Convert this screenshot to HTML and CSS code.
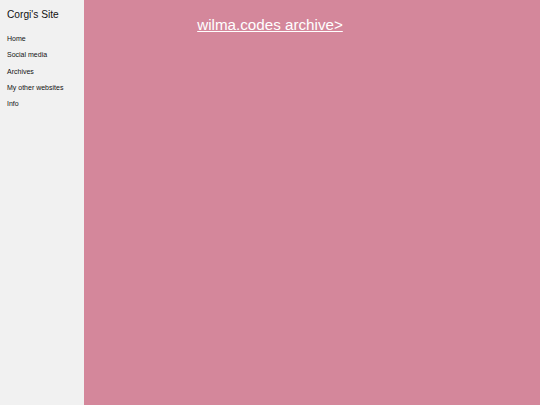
FILE: index.html
```html
<!DOCTYPE html>
<html>
<head>
<meta charset="utf-8">
<link rel="stylesheet" href="styles.css">
</head>
<body>
<div class="page">
  <aside class="sidebar">
    <div class="title">Corgi's Site</div>
    <nav class="nav">
      <a class="nav-item" href="#">Home</a>
      <a class="nav-item" href="#">Social media</a>
      <a class="nav-item" href="#">Archives</a>
      <a class="nav-item" href="#">My other websites</a>
      <a class="nav-item" href="#">Info</a>
    </nav>
  </aside>
  <main class="main">
    <a class="archive-link" href="#">wilma.codes archive&gt;</a>
  </main>
</div>
</body>
</html>
```
FILE: styles.css
```css
html, body {
  margin: 0;
  padding: 0;
  height: 100%;
}
body {
  font-family: "Liberation Sans", Arial, sans-serif;
}
.page {
  display: flex;
  height: 405px;
}
.sidebar {
  width: 84px;
  flex: none;
  background: #f1f1f1;
  padding: 8px 0 0 7px;
  box-sizing: border-box;
}
.title {
  font-size: 10.2px;
  color: #111;
  line-height: 14px;
}
.nav {
  display: flex;
  flex-direction: column;
  margin-top: 9px;
}
.nav-item {
  font-size: 7px;
  line-height: 16.3px;
  color: #111;
  text-decoration: none;
  white-space: nowrap;
}
.main {
  flex: 1;
  background: #d4879b;
  padding: 14px 84px 0 0;
  text-align: center;
}
.archive-link {
  font-size: 15.2px;
  color: #ffffff;
  text-decoration: underline;
  line-height: 22px;
}
```
